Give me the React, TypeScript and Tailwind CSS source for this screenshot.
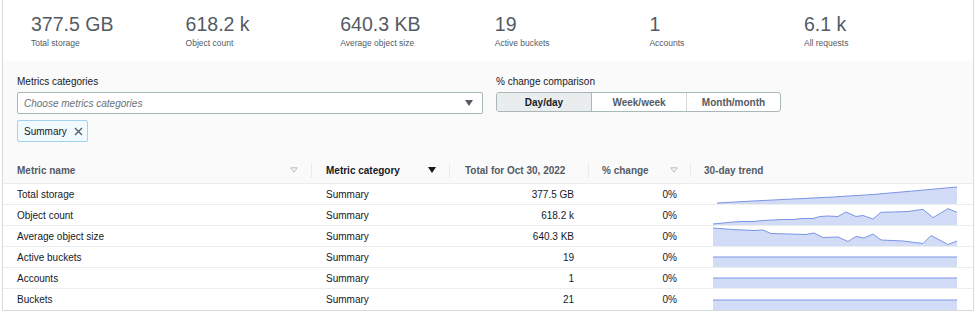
import React from "react";

const font = { fontFamily: '"Liberation Sans", Arial, sans-serif' };

const stats = [
  { value: "377.5 GB", label: "Total storage" },
  { value: "618.2 k", label: "Object count" },
  { value: "640.3 KB", label: "Average object size" },
  { value: "19", label: "Active buckets" },
  { value: "1", label: "Accounts" },
  { value: "6.1 k", label: "All requests" },
];

// sparkline points in a 244x20 box
const rising: [number, number][] = [
  [4, 19], [40, 17], [80, 15], [120, 13], [160, 10.5], [200, 7], [244, 3],
];
const jagged: [number, number][] = [
  [0, 19], [10, 18], [20, 17], [30, 16.5], [40, 16.5], [50, 15.5], [60, 15], [70, 14.5],
  [80, 14.5], [90, 13.5], [100, 13.5], [107, 11.5], [115, 11], [125, 11.5], [133, 7],
  [143, 11.5], [150, 10.5], [160, 14], [168, 7.3], [180, 7], [195, 6.5], [210, 4.3],
  [220, 12.7], [235, 3.7], [244, 7.3],
];
const falling: [number, number][] = [
  [0, 2], [20, 3.5], [40, 4.5], [50, 4], [58, 7.5], [93, 8.5], [101, 7], [110, 11.5],
  [125, 11], [135, 15.5], [143, 10.5], [151, 12], [160, 8], [168, 14], [190, 15],
  [210, 17.5], [218, 9.5], [235, 18.5], [244, 15],
];
const flat: [number, number][] = [
  [0, 10], [244, 10],
];

function Spark({ pts }: { pts: [number, number][] }) {
  const line = pts.map((p) => p.join(",")).join(" ");
  const area = `${pts[0][0]},20 ${line} ${pts[pts.length - 1][0]},20`;
  return (
    <svg width="244" height="20" viewBox="0 0 244 20" className="block">
      <polygon points={area} fill="#d3dcf7" />
      <polyline points={line} fill="none" stroke="#7a95e6" strokeWidth="1" />
    </svg>
  );
}

const rows = [
  { name: "Total storage", total: "377.5 GB", pts: rising },
  { name: "Object count", total: "618.2 k", pts: jagged },
  { name: "Average object size", total: "640.3 KB", pts: falling },
  { name: "Active buckets", total: "19", pts: flat },
  { name: "Accounts", total: "1", pts: flat },
  { name: "Buckets", total: "21", pts: flat },
];

const cols = "grid grid-cols-[309px_138px_139px_102px_1fr]";

function SortOutline() {
  return (
    <svg width="8" height="6" viewBox="0 0 8 6">
      <path d="M0.8 0.8 H7.2 L4 5.2 Z" fill="none" stroke="#aab7b8" strokeWidth="0.9" />
    </svg>
  );
}

function Sep() {
  return <div className="h-[15px] w-px bg-[#eaeded]" />;
}

export default function App() {
  return (
    <div className="min-h-[312px] w-[977px] bg-white" style={font}>
      <div className="ml-[2px] w-[972px] border-x border-b border-[#d5dbdb]">
        {/* Stats */}
        <div className="flex h-[61px] bg-white pl-[28px] pt-[13px]">
          {stats.map((s) => (
            <div key={s.label} className="w-[154.6px]">
              <div className="text-[19.5px] leading-[23px] text-[#545b64]">{s.value}</div>
              <div className="mt-[2px] text-[8.5px] leading-[11px] text-[#545b64]">{s.label}</div>
            </div>
          ))}
        </div>

        <div className="bg-[#fafafa]">
          {/* Filters */}
          <div className="flex px-[14px] pt-[15px]">
            <div className="w-[466px]">
              <div className="text-[10px] leading-[12px] text-[#16191f]">Metrics categories</div>
              <div className="mt-[4px] flex h-[22px] items-center justify-between rounded-[2px] border border-[#aab7b8] bg-white pl-[6px] pr-[9px]">
                <span className="text-[10px] italic text-[#687078]">Choose metrics categories</span>
                <svg width="8" height="6" viewBox="0 0 8 6">
                  <path d="M0 0 H8 L4 6 Z" fill="#545b64" />
                </svg>
              </div>
              <div className="mt-[6px] flex h-[22px] w-[71px] items-center gap-[7px] rounded-[2px] border border-[#9fd3f0] bg-[#f1faff] pl-[6px]">
                <span className="text-[10px] text-[#16191f]">Summary</span>
                <svg width="9" height="9" viewBox="0 0 9 9">
                  <path d="M1 1 L8 8 M8 1 L1 8" stroke="#545b64" strokeWidth="1.3" />
                </svg>
              </div>
            </div>
            <div className="ml-[13px]">
              <div className="text-[10px] leading-[12px] text-[#16191f]">% change comparison</div>
              <div className="mt-[4px] flex h-[20px] w-[285px] overflow-hidden rounded-[3px] border border-[#aab7b8] bg-white text-[10px] font-bold">
                <div className="flex w-[95px] items-center justify-center border-r border-[#aab7b8] bg-[#eaeded] text-[#16191f]">Day/day</div>
                <div className="flex w-[95px] items-center justify-center border-r border-[#d5dbdb] text-[#545b64]">Week/week</div>
                <div className="flex flex-1 items-center justify-center text-[#545b64]">Month/month</div>
              </div>
            </div>
          </div>

          {/* Table header */}
          <div className={`${cols} mt-[15px] h-[27px] items-center border-b border-[#eaeded] text-[10px] font-bold`}>
            <div className="flex items-center justify-between pl-[14px] text-[#545b64]">
              <span>Metric name</span>
              <div className="flex items-center gap-[13px]">
                <SortOutline />
                <Sep />
              </div>
            </div>
            <div className="flex items-center justify-between pl-[14px] text-[#16191f]">
              <span>Metric category</span>
              <div className="flex items-center gap-[13px]">
                <svg width="8" height="6" viewBox="0 0 8 6">
                  <path d="M0 0 H8 L4 6 Z" fill="#16191f" />
                </svg>
                <Sep />
              </div>
            </div>
            <div className="flex items-center justify-between pl-[15px] text-[#545b64]">
              <span>Total for Oct 30, 2022</span>
              <Sep />
            </div>
            <div className="flex items-center justify-between pl-[13px] text-[#545b64]">
              <span>% change</span>
              <div className="flex items-center gap-[12px]">
                <SortOutline />
                <Sep />
              </div>
            </div>
            <div className="pl-[13px] text-[#545b64]">30-day trend</div>
          </div>
        </div>

        {/* Rows */}
        {rows.map((r, i) => (
          <div
            key={r.name}
            className={`${cols} h-[21px] items-center bg-white text-[10px] text-[#16191f] ${i < rows.length - 1 ? "border-b border-[#eaeded]" : ""}`}
          >
            <div className="pl-[14px]">{r.name}</div>
            <div className="pl-[14px]">Summary</div>
            <div className="pr-[15px] text-right">{r.total}</div>
            <div className="pr-[14px] text-right">0%</div>
            <div className="pl-[22px]">
              <Spark pts={r.pts} />
            </div>
          </div>
        ))}
      </div>
    </div>
  );
}
